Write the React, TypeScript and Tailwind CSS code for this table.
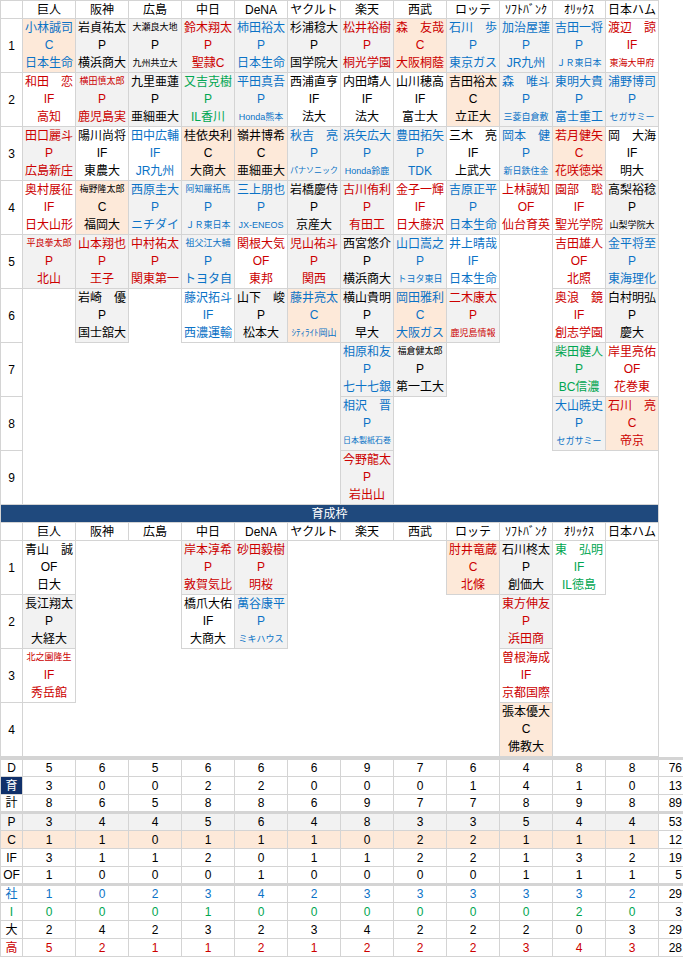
import React from "react";

const TEAMS = ["巨人", "阪神", "広島", "中日", "DeNA", "ヤクルト", "楽天", "西武", "ロッテ", "ｿﾌﾄﾊﾞﾝｸ", "ｵﾘｯｸｽ", "日本ハム"];

// name,pos,school,kind  (s=社会人 d=大学 k=高校 i=独立L)
const DRAFT: string[][] = [
  ["小林誠司,C,日本生命,s", "岩貞祐太,P,横浜商大,d", "大瀬良大地,P,九州共立大,d", "鈴木翔太,P,聖隷C,k", "柿田裕太,P,日本生命,s", "杉浦稔大,P,国学院大,d", "松井裕樹,P,桐光学園,k", "森　友哉,C,大阪桐蔭,k", "石川　歩,P,東京ガス,s", "加治屋蓮,P,JR九州,s", "吉田一将,P,ＪＲ東日本,s", "渡辺　諒,IF,東海大甲府,k"],
  ["和田　恋,IF,高知,k", "横田慎太郎,P,鹿児島実,k", "九里亜蓮,P,亜細亜大,d", "又吉克樹,P,IL香川,i", "平田真吾,P,Honda熊本,s", "西浦直亨,IF,法大,d", "内田靖人,IF,法大,d", "山川穂高,IF,富士大,d", "吉田裕太,C,立正大,d", "森　唯斗,P,三菱自倉敷,s", "東明大貴,P,富士重工,s", "浦野博司,P,セガサミー,s"],
  ["田口麗斗,P,広島新庄,k", "陽川尚将,IF,東農大,d", "田中広輔,IF,JR九州,s", "桂依央利,C,大商大,d", "嶺井博希,C,亜細亜大,d", "秋吉　亮,P,パナソニック,s", "浜矢広大,P,Honda鈴鹿,s", "豊田拓矢,P,TDK,s", "三木　亮,IF,上武大,d", "岡本　健,P,新日鉄住金,s", "若月健矢,C,花咲徳栄,k", "岡　大海,IF,明大,d"],
  ["奥村展征,IF,日大山形,k", "梅野隆太郎,C,福岡大,d", "西原圭大,P,ニチダイ,s", "阿知羅拓馬,P,ＪＲ東日本,s", "三上朋也,P,JX-ENEOS,s", "岩橋慶侍,P,京産大,d", "古川侑利,P,有田工,k", "金子一輝,IF,日大藤沢,k", "吉原正平,P,日本生命,s", "上林誠知,OF,仙台育英,k", "園部　聡,IF,聖光学院,k", "高梨裕稔,P,山梨学院大,d"],
  ["平良拳太郎,P,北山,k", "山本翔也,P,王子,k", "中村祐太,P,関東第一,k", "祖父江大輔,P,トヨタ自,s", "関根大気,OF,東邦,k", "児山祐斗,P,関西,k", "西宮悠介,P,横浜商大,d", "山口嵩之,P,トヨタ東日,s", "井上晴哉,IF,日本生命,s", "", "吉田雄人,OF,北照,k", "金平将至,P,東海理化,s"],
  ["", "岩崎　優,P,国士舘大,d", "", "藤沢拓斗,IF,西濃運輸,s", "山下　峻,P,松本大,d", "藤井亮太,C,ｼﾃｨﾗｲﾄ岡山,s", "横山貴明,P,早大,d", "岡田雅利,C,大阪ガス,s", "二木康太,P,鹿児島情報,k", "", "奥浪　鏡,IF,創志学園,k", "白村明弘,P,慶大,d"],
  ["", "", "", "", "", "", "相原和友,P,七十七銀,s", "福倉健太郎,P,第一工大,d", "", "", "柴田健人,P,BC信濃,i", "岸里亮佑,OF,花巻東,k"],
  ["", "", "", "", "", "", "相沢　晋,P,日本製紙石巻,s", "", "", "", "大山暁史,P,セガサミー,s", "石川　亮,C,帝京,k"],
  ["", "", "", "", "", "", "今野龍太,P,岩出山,k", "", "", "", "", ""],
];

const IKUSEI: string[][] = [
  ["青山　誠,OF,日大,d", "", "", "岸本淳希,P,敦賀気比,k", "砂田毅樹,P,明桜,k", "", "", "", "肘井竜蔵,C,北條,k", "石川柊太,P,創価大,d", "東　弘明,IF,IL徳島,i", ""],
  ["長江翔太,P,大経大,d", "", "", "橋爪大佑,IF,大商大,d", "萬谷康平,P,ミキハウス,s", "", "", "", "", "東方伸友,P,浜田商,k", "", ""],
  ["北之園隆生,IF,秀岳館,k", "", "", "", "", "", "", "", "", "曽根海成,IF,京都国際,k", "", ""],
  ["", "", "", "", "", "", "", "", "", "張本優大,C,佛教大,d", "", ""],
];

const KIND: Record<string, string> = {
  s: "text-[#0b72c6]",
  d: "text-black",
  k: "text-[#cc0000]",
  i: "text-[#00a651]",
};

const BG: Record<string, string> = {
  P: "bg-[#f2f2f2]",
  C: "bg-[#fde9d9]",
  IF: "bg-white",
  OF: "bg-white",
};

const LINE = "border border-[#d4d4d4]";

// rough width in em, to shrink long names like the sheet does
function em(s: string) {
  let w = 0;
  for (const ch of s) {
    const c = ch.charCodeAt(0);
    if (c >= 0xff61 && c <= 0xff9f) w += 0.5;
    else if (c < 128) w += /[A-Z]/.test(ch) ? 0.7 : ch === "-" ? 0.35 : 0.55;
    else w += 1;
  }
  return w;
}

function size(s: string) {
  const w = em(s);
  if (w > 5.5) return "text-[8px]";
  if (w > 4.2) return "text-[9px]";
  return "text-[12px]";
}

function Player({ v }: { v: string }) {
  if (!v) return <td className="p-0" />;
  const [name, pos, school, kind] = v.split(",");
  return (
    <td className={`${LINE} p-0 ${BG[pos]} ${KIND[kind]}`}>
      <div className="grid h-[53px] grid-rows-3 items-center overflow-hidden whitespace-nowrap text-center leading-none">
        <span className={size(name)}>{name}</span>
        <span className="text-[12px]">{pos}</span>
        <span className={size(school)}>{school}</span>
      </div>
    </td>
  );
}

function HeaderRow() {
  return (
    <tr>
      <th className={`${LINE} h-[18px] p-0 font-normal`} />
      {TEAMS.map((t) => (
        <th key={t} className={`${LINE} h-[18px] p-0 text-center text-[12px] font-normal leading-none`}>
          {t}
        </th>
      ))}
    </tr>
  );
}

function Rows({ rows }: { rows: string[][] }) {
  return (
    <>
      {rows.map((r, i) => (
        <tr key={i}>
          <td className={`${LINE} p-0 text-center text-[12px]`}>{i + 1}</td>
          {r.map((v, j) => (
            <Player key={j} v={v} />
          ))}
        </tr>
      ))}
    </>
  );
}

type Stat = {
  label: string;
  vals: number[];
  total: number;
  bg?: string;
  color?: string;
  labelCls?: string;
  thick?: boolean;
};

const STATS: Stat[] = [
  { label: "D", vals: [5, 6, 5, 6, 6, 6, 9, 7, 6, 4, 8, 8], total: 76, thick: true },
  { label: "育", vals: [3, 0, 0, 2, 2, 0, 0, 0, 1, 4, 1, 0], total: 13, labelCls: "bg-[#10306a] text-white" },
  { label: "計", vals: [8, 6, 5, 8, 8, 6, 9, 7, 7, 8, 9, 8], total: 89 },
  { label: "P", vals: [3, 4, 4, 5, 6, 4, 8, 3, 3, 5, 4, 4], total: 53, bg: "bg-[#f2f2f2]", thick: true },
  { label: "C", vals: [1, 1, 0, 1, 1, 1, 0, 2, 2, 1, 1, 1], total: 12, bg: "bg-[#fde9d9]" },
  { label: "IF", vals: [3, 1, 1, 2, 0, 1, 1, 2, 2, 1, 3, 2], total: 19 },
  { label: "OF", vals: [1, 0, 0, 0, 1, 0, 0, 0, 0, 1, 1, 1], total: 5 },
  { label: "社", vals: [1, 0, 2, 3, 4, 2, 3, 3, 3, 3, 3, 2], total: 29, color: "text-[#0b72c6]", thick: true },
  { label: "I", vals: [0, 0, 0, 1, 0, 0, 0, 0, 0, 0, 2, 0], total: 3, color: "text-[#00a651]" },
  { label: "大", vals: [2, 4, 2, 3, 2, 3, 4, 2, 2, 2, 0, 3], total: 29 },
  { label: "高", vals: [5, 2, 1, 1, 2, 1, 2, 2, 2, 3, 4, 3], total: 28, color: "text-[#cc0000]" },
];

export default function App() {
  return (
    <div className="w-[683px] bg-white font-['Liberation_Sans','Noto_Sans_CJK_JP',sans-serif] text-[12px] text-black">
      <table className={`${LINE} w-[659px] table-fixed border-collapse`}>
        <colgroup>
          <col className="w-[22px]" />
          {TEAMS.map((t) => (
            <col key={t} className="w-[53px]" />
          ))}
        </colgroup>
        <tbody>
          <HeaderRow />
          <Rows rows={DRAFT} />
          <tr>
            <td colSpan={13} className={`${LINE} h-[18px] bg-[#1f497d] p-0 text-center text-[12px] leading-none text-white`}>
              育成枠
            </td>
          </tr>
          <HeaderRow />
          <Rows rows={IKUSEI} />
        </tbody>
      </table>

      <table className={`${LINE} w-[683px] table-fixed border-collapse`}>
        <colgroup>
          <col className="w-[22px]" />
          {TEAMS.map((t) => (
            <col key={t} className="w-[53px]" />
          ))}
          <col className="w-[25px]" />
        </colgroup>
        <tbody>
          {STATS.map((s) => {
            const edge = s.thick ? "border-t-[3px]" : "";
            const color = s.color ?? "text-black";
            return (
              <tr key={s.label}>
                <td className={`${LINE} ${edge} h-[18px] p-0 text-center leading-none ${s.labelCls ?? `${s.bg ?? ""} ${color}`}`}>
                  {s.label}
                </td>
                {s.vals.map((n, i) => (
                  <td key={i} className={`${LINE} ${edge} h-[18px] p-0 text-center leading-none ${s.bg ?? ""} ${color}`}>
                    {n}
                  </td>
                ))}
                <td className={`${LINE} ${edge} h-[18px] p-0 pr-[1px] text-right leading-none`}>{s.total}</td>
              </tr>
            );
          })}
        </tbody>
      </table>
    </div>
  );
}
